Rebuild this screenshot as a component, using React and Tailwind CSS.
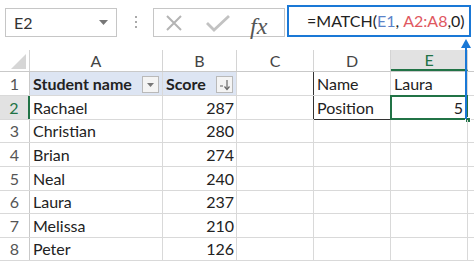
import React from "react";

const COLS = [133, 74, 77, 77, 77];
const ROWH = [24, 24, 23, 24, 24, 23, 24, 23];
const data = [
  ["Student name", "Score"],
  ["Rachael", "287"],
  ["Christian", "280"],
  ["Brian", "274"],
  ["Neal", "240"],
  ["Laura", "237"],
  ["Melissa", "210"],
  ["Peter", "126"],
];

function FilterBtn({ sort }) {
  return (
    <div className="absolute right-[3px] top-[4px] w-[17px] h-[17px] bg-[#f4f4f4] border border-[#b9b9b9] flex items-center justify-center">
      {sort ? (
        <svg width="13" height="13" viewBox="0 0 13 13">
          <line x1="2" y1="8" x2="5" y2="8" stroke="#777" strokeWidth="1.2" />
          <line x1="9" y1="2" x2="9" y2="11" stroke="#666" strokeWidth="1.2" />
          <path d="M6.5 8.5 L9 11.5 L11.5 8.5" fill="none" stroke="#666" strokeWidth="1.2" />
        </svg>
      ) : (
        <svg width="9" height="6" viewBox="0 0 9 6">
          <path d="M1 1 L8 1 L4.5 5 Z" fill="#777" />
        </svg>
      )}
    </div>
  );
}

export default function App() {
  const font = { fontFamily: "Lato, 'Open Sans', sans-serif" };
  return (
    <div className="relative w-[474px] h-[264px] bg-white overflow-hidden text-[#222]" style={font}>
      {/* formula bar */}
      <div className="relative h-[50px] bg-white">
        <div className="absolute left-[5px] top-[8px] w-[112px] h-[29px] border border-[#c6c6c6] bg-white flex items-center pl-[8px] text-[16px] text-[#333]">
          E2
          <svg className="absolute right-[8px] top-[11px]" width="9" height="5" viewBox="0 0 9 5">
            <path d="M0 0 L9 0 L4.5 5 Z" fill="#777" />
          </svg>
        </div>
        <div className="absolute left-[135px] top-[16px] flex flex-col gap-[3px]">
          <div className="w-[2px] h-[2px] bg-[#aaa]" />
          <div className="w-[2px] h-[2px] bg-[#aaa]" />
          <div className="w-[2px] h-[2px] bg-[#aaa]" />
        </div>
        <div className="absolute left-[153px] top-[8px] w-[132px] h-[29px] border border-[#c6c6c6] bg-white">
          <svg className="absolute left-[11px] top-[5px]" width="18" height="18" viewBox="0 0 18 18">
            <path d="M2 2 L16 16 M16 2 L2 16" stroke="#b4b4b4" strokeWidth="2" fill="none" />
          </svg>
          <svg className="absolute left-[51px] top-[5px]" width="26" height="18" viewBox="0 0 26 18">
            <path d="M2 9 L9 16 L24 2" stroke="#c2c2c2" strokeWidth="2.8" fill="none" />
          </svg>
          <span
            className="absolute left-[96px] top-[-1px] text-[24px] italic text-[#555]"
            style={{ fontFamily: "'Liberation Serif', 'DejaVu Serif', serif" }}
          >
            fx
          </span>
        </div>
        <div className="absolute left-[287px] top-[5px] w-[184px] h-[32px] border-2 border-[#1a78d6] bg-white flex items-center pl-[18px] text-[16px] text-[#222]">
          <span>=MATCH(</span>
          <span className="text-[#5b83c9]">E1</span>
          <span>,&nbsp;</span>
          <span className="text-[#e0585f]">A2:A8</span>
          <span>,0)</span>
        </div>
      </div>

      {/* column headers */}
      <div className="flex h-[22px] border-b border-[#c9c9c9]">
        <div className="relative w-[30px] border-r border-[#d4d4d4]">
          <svg className="absolute left-[11px] top-[4px]" width="15" height="15" viewBox="0 0 15 15">
            <path d="M15 0 L15 15 L0 15 Z" fill="#d6d6d6" />
          </svg>
        </div>
        {["A", "B", "C", "D", "E"].map((c, i) => (
          <div
            key={c}
            className={
              "flex items-center justify-center text-[16px] border-r border-[#d4d4d4] " +
              (c === "E" ? "bg-[#e2e2e2] text-[#217346] border-b-2 border-b-[#217346]" : "text-[#444]")
            }
            style={{ width: COLS[i] }}
          >
            {c}
          </div>
        ))}
        <div className="flex-1" />
      </div>

      {/* rows */}
      {ROWH.map((h, r) => (
        <div key={r} className="flex border-b border-[#d9d9d9]" style={{ height: h }}>
          <div
            className={
              "w-[30px] flex items-center justify-center text-[16px] " +
              (r === 1 ? "bg-[#e2e2e2] text-[#217346] border-r-2 border-[#217346]" : "text-[#555] border-r border-[#c9c9c9]")
            }
          >
            {r + 1}
          </div>
          {/* A */}
          <div
            className={
              "relative flex items-center pl-[3px] text-[16px] border-r border-[#d9d9d9] " +
              (r === 0 ? "bg-[#dde5f3] font-bold" : "")
            }
            style={{ width: COLS[0] }}
          >
            {data[r][0]}
            {r === 0 && <FilterBtn />}
          </div>
          {/* B */}
          <div
            className={
              "relative flex items-center text-[16px] border-r border-[#d9d9d9] " +
              (r === 0 ? "bg-[#dde5f3] font-bold pl-[3px]" : "justify-end pr-[2px]")
            }
            style={{ width: COLS[1] }}
          >
            {data[r][1]}
            {r === 0 && <FilterBtn sort />}
          </div>
          {/* C */}
          <div
            className={"border-r " + (r < 2 ? "border-[#333]" : "border-[#d9d9d9]")}
            style={{ width: COLS[2] }}
          />
          {/* D */}
          <div
            className={
              "flex items-center pl-[3px] text-[16px] border-r border-[#d9d9d9] " +
              (r === 1 ? "relative after:absolute after:left-0 after:right-[-1px] after:bottom-[-1px] after:h-[1px] after:bg-[#333]" : "")
            }
            style={{ width: COLS[3] }}
          >
            {r === 0 ? "Name" : r === 1 ? "Position" : ""}
          </div>
          {/* E */}
          <div
            className={
              "relative flex items-center text-[16px] border-r border-[#d9d9d9] " +
              (r === 1 ? "justify-end pr-[4px]" : "pl-[3px]")
            }
            style={{ width: COLS[4] }}
          >
            {r === 0 ? "Laura" : r === 1 ? "5" : ""}
            {r === 1 && (
              <>
                <div className="absolute left-[-1px] right-[-1px] top-[-1px] bottom-[-1px] border-2 border-[#217346]" />
                <div className="absolute right-[-4px] bottom-[-4px] w-[6px] h-[6px] bg-[#217346] border border-white" />
              </>
            )}
          </div>
          <div className="flex-1" />
        </div>
      ))}

      {/* blue arrow */}
      <svg className="absolute left-[460px] top-[37px]" width="12" height="84" viewBox="0 0 12 84">
        <line x1="6" y1="4" x2="6" y2="82" stroke="#1a78d6" strokeWidth="2" />
        <path d="M1 11 L6 2 L11 11 Z" fill="#1a78d6" />
      </svg>
    </div>
  );
}
